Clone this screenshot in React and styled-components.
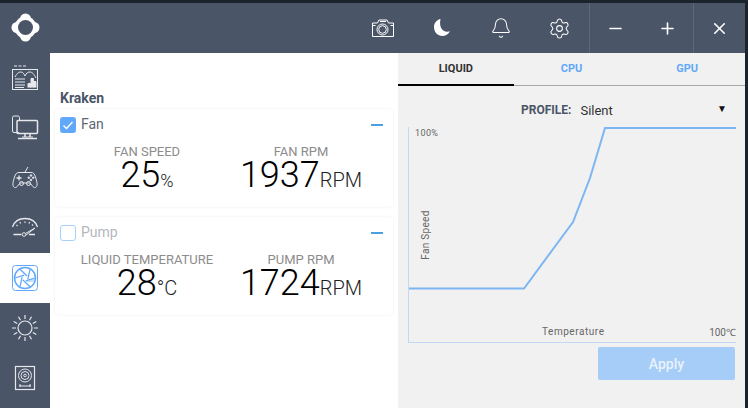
import styled, { createGlobalStyle } from "styled-components";
import { Bell, Settings, Minus, Plus, X } from "lucide-react";

const GlobalStyle = createGlobalStyle`
  html, body {
    margin: 0;
    height: 100%;
    background: #1b232d;
    font-family: Roboto, "Liberation Sans", sans-serif;
    overflow: hidden;
  }
  * {
    box-sizing: border-box;
  }
`;

const Logo = () => (
  <svg width="50" height="50" viewBox="0 0 50 50">
    <g fill="#fff">
      <circle cx="25.5" cy="24.5" r="11" />
      <circle cx="25.5" cy="16" r="5.500" />
      <circle cx="25.5" cy="33" r="5.500" />
      <circle cx="17" cy="24.5" r="5.500" />
      <circle cx="34" cy="24.5" r="5.500" />
    </g>
    <circle cx="25.5" cy="24.5" r="7.500" fill="#4a5568" />
  </svg>
);

const DashIcon = () => (
  <svg width="28" height="26" viewBox="0 0 28 26" fill="none" stroke="currentColor" strokeWidth="1">
    <path d="M3 1h3M7.500 1h3M12 1h3" />
    <rect x="1.500" y="4.500" width="25" height="20" />
    <path d="M4 12c2-4 4-5 6-5s3 2 4 4c1-3 3-4 5-4s4 2 6 6" />
    <path d="M4 14h10M4 17h10M4 20h10M4 22.500h9" />
    <path d="M17 22.500v-4h2.500v4M20 22.500v-9h2.500v9M23 22.500v-6h2v6" fill="currentColor" />
  </svg>
);

const DesktopIcon = () => (
  <svg width="28" height="26" viewBox="0 0 28 26" fill="none" stroke="currentColor" strokeWidth="1">
    <path d="M8 17.500H3a1.500 1.500 0 0 1-1.500-1.500V2.500A1.500 1.500 0 0 1 3 1h4a1.500 1.500 0 0 1 1.500 1.500V5" />
    <rect x="6" y="5.500" width="20.500" height="13" rx="1" strokeWidth="1.500" />
    <path d="M14 19v3M19 19v3M7 23.500h19" strokeWidth="1.500" />
    <path d="M11 22h11" />
  </svg>
);

const GamepadIcon = () => (
  <svg width="28" height="26" viewBox="0 0 28 26" fill="none" stroke="currentColor" strokeWidth="1">
    <path d="M14 7l3-5" />
    <path d="M8 7.500h12c2.500 0 3.500 1.500 4.500 4.500.8 2.800 2 6.500 1.500 8.500-.5 2-2.500 2.800-4 1.200l-2.500-3c-.5-.6-1-.7-2-.7h-7c-1 0-1.500.1-2 .7l-2.500 3c-1.500 1.600-3.500.8-4-1.200-.5-2 .7-5.700 1.500-8.500 1-3 2-4.500 4.500-4.500z" />
    <path d="M8 10.500v5M5.500 13h5" strokeWidth="1.300" />
    <circle cx="20" cy="10.500" r=".8" fill="currentColor" />
    <circle cx="20" cy="15" r=".8" fill="currentColor" />
    <circle cx="17.800" cy="12.700" r=".8" fill="currentColor" />
    <circle cx="22.200" cy="12.700" r=".8" fill="currentColor" />
    <circle cx="10.500" cy="18.500" r="2" />
    <circle cx="17.500" cy="18.500" r="2" />
  </svg>
);

const GaugeIcon = () => (
  <svg width="28" height="24" viewBox="0 0 28 24" fill="none" stroke="currentColor" strokeWidth="1">
    <path d="M1.500 11C3.500 5 8 2.500 14 2.500S24.500 5 26.500 11" strokeWidth="1.300" />
    <path d="M5.500 9l1 1M9 6l.5 1.500M14 5.500V7M18.500 6l-.5 1.500M22 8.500l-1 1" strokeWidth="1.200" />
    <path d="M2.500 18.500h8M18 18.500h6" strokeWidth="1.500" />
    <circle cx="13" cy="18.500" r="1.800" />
    <path d="M14.500 17.500L24 12M14.500 19.500L24 12" />
  </svg>
);

// shutter blades: each runs from the rim to the corner of the small centre hexagon
const blades = [0, 60, 120, 180, 240, 300].map((deg) => {
  const a = (deg * Math.PI) / 180;
  const b = ((deg + 75) * Math.PI) / 180;
  const x1 = 13 + 10 * Math.cos(a);
  const y1 = 13 + 10 * Math.sin(a);
  const x2 = 13 + 3 * Math.cos(b);
  const y2 = 13 + 3 * Math.sin(b);
  return `M${x1.toFixed(1)} ${y1.toFixed(1)}L${x2.toFixed(1)} ${y2.toFixed(1)}`;
});

const FanIcon = () => (
  <svg width="26" height="26" viewBox="0 0 26 26" fill="none" stroke="#62a8fa" strokeWidth="1">
    <rect x=".5" y=".5" width="25" height="25" rx="3" />
    <circle cx="13" cy="13" r="10.500" strokeWidth="1.500" />
    <path d={blades.join("")} strokeWidth="1.300" />
    <path d="M15 14h7v3h-7z" fill="#62a8fa" fillOpacity=".35" stroke="none" />
  </svg>
);

const SunIcon = () => (
  <svg width="28" height="28" viewBox="0 0 28 28" fill="none" stroke="currentColor" strokeWidth="1.200">
    <circle cx="14" cy="14" r="7" />
    <path d="M14 1v4M14 23v4M1 14h4M23 14h4M7.500 2.700l2 3.500M18.500 21.800l2 3.500M2.700 7.500l3.500 2M21.800 18.500l3.500 2M2.700 20.500l3.500-2M21.800 9.500l3.500-2M7.500 25.300l2-3.500M18.500 6.200l2-3.500" />
  </svg>
);

const DriveIcon = () => (
  <svg width="22" height="26" viewBox="0 0 22 26" fill="none" stroke="currentColor" strokeWidth="1">
    <rect x="1.500" y="1.500" width="19" height="23" strokeWidth="1.200" />
    <circle cx="11" cy="10.500" r="6.500" />
    <circle cx="11" cy="10.500" r="4" />
    <circle cx="11" cy="10.500" r="1.300" />
    <path d="M5 21h12M6 19v3M16 19v3" />
  </svg>
);

const CameraIcon = () => (
  <svg width="24" height="20" viewBox="0 0 24 20" fill="none" stroke="currentColor" strokeWidth="1">
    <path d="M1.500 5h5l1.500-3h8l1.500 3h5v13.500h-21z" />
    <path d="M9 3.500h6" />
    <circle cx="11.500" cy="11.500" r="5.500" />
    <circle cx="11.500" cy="11.500" r="3.800" />
    <path d="M1.500 7.500h3M19.500 7.500h3" />
  </svg>
);

const MoonIcon = () => (
  <svg width="20" height="20" viewBox="0 0 20 20">
    <path
      fill="#fff"
      d="M8.500 1C5 1.600 2 4.700 2 9.200 2 14.100 5.800 18 10.300 18c3.300 0 6-1.800 7.700-4.700-4 1.300-8-.6-9.300-4.300C7.800 6.300 8 3.500 8.500 1z"
    />
  </svg>
);

const CheckIcon = () => (
  <svg width="16" height="16" viewBox="0 0 16 16" fill="none" stroke="#fff" strokeWidth="1.400">
    <path d="M3.500 8.500l3 3 6-6.500" />
  </svg>
);

const sideItems = [
  { id: "dash", icon: <DashIcon /> },
  { id: "desktop", icon: <DesktopIcon /> },
  { id: "game", icon: <GamepadIcon /> },
  { id: "gauge", icon: <GaugeIcon /> },
  { id: "fan", icon: <FanIcon />, active: true },
  { id: "sun", icon: <SunIcon /> },
  { id: "drive", icon: <DriveIcon /> },
];

const cards = [
  {
    name: "Fan",
    checked: true,
    stats: [
      { label: "FAN SPEED", value: "25", unit: "%", small: true },
      { label: "FAN RPM", value: "1937", unit: "RPM" },
    ],
  },
  {
    name: "Pump",
    checked: false,
    stats: [
      { label: "LIQUID TEMPERATURE", value: "28", unit: "°C" },
      { label: "PUMP RPM", value: "1724", unit: "RPM" },
    ],
  },
];

const App = () => {
  return (
    <>
      <GlobalStyle />
      <Window>
        <Header>
          <LogoWrap>
            <Logo />
          </LogoWrap>
          <HeaderTools>
            <ToolButton><CameraIcon /></ToolButton>
            <ToolButton><MoonIcon /></ToolButton>
            <ToolButton><Bell size={22} strokeWidth={1.1} /></ToolButton>
            <ToolButton><Settings size={23} strokeWidth={1.1} /></ToolButton>
          </HeaderTools>
          <WindowGroup $width={104}>
            <WindowButton><Minus size={19} strokeWidth={2} /></WindowButton>
            <WindowButton><Plus size={19} strokeWidth={2} /></WindowButton>
          </WindowGroup>
          <WindowGroup $width={52}>
            <WindowButton><X size={19} strokeWidth={2} /></WindowButton>
          </WindowGroup>
        </Header>
        <Body>
          <Sidebar>
            {sideItems.map((item) => (
              <SideItem key={item.id} $active={item.active}>
                {item.icon}
              </SideItem>
            ))}
          </Sidebar>
          <Main>
            <Title>Kraken</Title>
            {cards.map((card) => (
              <Card key={card.name}>
                <CardHead>
                  <Check $checked={card.checked}>{card.checked && <CheckIcon />}</Check>
                  <CardName $checked={card.checked}>{card.name}</CardName>
                  <Collapse />
                </CardHead>
                <Stats>
                  {card.stats.map((stat) => (
                    <Stat key={stat.label}>
                      <StatLabel>{stat.label}</StatLabel>
                      <StatValue>
                        {stat.value}
                        <StatUnit $small={stat.small}>{stat.unit}</StatUnit>
                      </StatValue>
                    </Stat>
                  ))}
                </Stats>
              </Card>
            ))}
          </Main>
          <Panel>
            <Tabs>
              <Tab $active>LIQUID</Tab>
              <Tab>CPU</Tab>
              <Tab>GPU</Tab>
            </Tabs>
            <ProfileRow>
              <ProfileLabel>PROFILE:</ProfileLabel>
              <ProfileValue>Silent</ProfileValue>
              <ProfileArrow>▼</ProfileArrow>
            </ProfileRow>
            <Chart>
              <svg width="328" height="216" viewBox="-1 0 328 216">
                <path
                  d="M0 161.500H115L164 95l17-44 15-50H327"
                  fill="none"
                  stroke="#7db6f3"
                  strokeWidth="2"
                />
              </svg>
              <PercentLabel>100%</PercentLabel>
              <YLabel>Fan Speed</YLabel>
              <XLabel>Temperature</XLabel>
              <MaxLabel>100℃</MaxLabel>
            </Chart>
            <ApplyRow>
              <ApplyButton>Apply</ApplyButton>
            </ApplyRow>
          </Panel>
        </Body>
      </Window>
    </>
  );
};

const Window = styled.div`
  width: 745px;
  height: 405px;
  margin-top: 3px;
  display: flex;
  flex-direction: column;
  background: #4a5568;
`;

const Header = styled.div`
  height: 50px;
  flex: none;
  display: flex;
  align-items: stretch;
  color: #fff;
`;

const LogoWrap = styled.div`
  width: 50px;
  display: flex;
`;

const HeaderTools = styled.div`
  margin-left: auto;
  display: flex;
`;

const ToolButton = styled.div`
  width: 59px;
  display: flex;
  align-items: center;
  justify-content: center;
`;

const WindowGroup = styled.div`
  width: ${(p) => p.$width}px;
  display: flex;
  border-left: 1px solid #5e6879;
`;

const WindowButton = styled.div`
  flex: 1;
  display: flex;
  align-items: center;
  justify-content: center;
`;

const Body = styled.div`
  flex: 1;
  min-height: 0;
  display: flex;
`;

const Sidebar = styled.div`
  width: 50px;
  flex: none;
  display: flex;
  flex-direction: column;
  color: #e6e8ec;
`;

const SideItem = styled.div`
  height: 50px;
  flex: none;
  display: flex;
  align-items: center;
  justify-content: center;
  background: ${(p) => (p.$active ? "#fff" : "transparent")};
`;

const Main = styled.div`
  width: 348px;
  flex: none;
  background: #fff;
  padding: 37px 5px 0;
`;

const Title = styled.div`
  height: 19px;
  padding-left: 5px;
  font-size: 14px;
  font-weight: 700;
  line-height: 16px;
  color: #4a5568;
`;

const Card = styled.div`
  height: 98px;
  margin-bottom: 10px;
  padding: 0 10px 0 5px;
  border-radius: 5px;
  background: #fff;
  box-shadow: 0 0 3px rgba(0, 0, 0, 0.07);
`;

const CardHead = styled.div`
  height: 31px;
  display: flex;
  align-items: center;
  gap: 5px;
`;

const Check = styled.div`
  width: 16px;
  height: 16px;
  border-radius: 3px;
  background: ${(p) => (p.$checked ? "#62a8fa" : "#fff")};
  border: ${(p) => (p.$checked ? "none" : "1px solid #a9cffb")};
`;

const CardName = styled.span`
  padding-bottom: 2px;
  font-size: 14px;
  color: ${(p) => (p.$checked ? "#5f6671" : "#b4b7bc")};
`;

const Collapse = styled.div`
  width: 12px;
  height: 2px;
  margin-left: auto;
  background: #4a9fe0;
`;

const Stats = styled.div`
  display: grid;
  grid-template-columns: 154px 154px;
  margin: 5px 0 0 10px;
`;

const Stat = styled.div`
  display: flex;
  flex-direction: column;
  align-items: center;
`;

const StatLabel = styled.div`
  font-size: 13px;
  line-height: 14px;
  color: #8c8c8c;
  white-space: nowrap;
`;

const StatValue = styled.div`
  font-size: 36px;
  font-weight: 350;
  line-height: 32px;
  color: #000;
  white-space: nowrap;
`;

const StatUnit = styled.span`
  font-size: ${(p) => (p.$small ? "18px" : "20px")};
  font-weight: 350;
  color: #222;
`;

const Panel = styled.div`
  flex: 1;
  min-width: 0;
  display: flex;
  flex-direction: column;
  background: #f1f1f1;
`;

const Tabs = styled.div`
  height: 33px;
  flex: none;
  display: grid;
  grid-template-columns: repeat(3, 1fr);
  border-bottom: 1px solid #a8a8ac;
`;

const Tab = styled.div`
  height: 33px;
  display: flex;
  align-items: center;
  justify-content: center;
  font-size: 11px;
  font-weight: 700;
  color: ${(p) => (p.$active ? "#333" : "#62a8fa")};
  border-bottom: 2px solid ${(p) => (p.$active ? "#000" : "transparent")};
`;

const ProfileRow = styled.div`
  height: 41px;
  flex: none;
  display: flex;
  align-items: center;
  padding: 7px 18px 0 123px;
`;

const ProfileLabel = styled.span`
  font-size: 12px;
  font-weight: 700;
  color: #4a5568;
  margin-right: 9px;
`;

const ProfileValue = styled.span`
  font-size: 13px;
  color: #333;
`;

const ProfileArrow = styled.span`
  margin-left: auto;
  font-size: 10px;
  color: #111;
  position: relative;
  top: -2px;
`;

const Chart = styled.div`
  position: relative;
  width: 328px;
  height: 216px;
  flex: none;
  margin-left: 10px;
  border-left: 1px solid #c3d8f3;
  border-bottom: 1px solid #c3d8f3;
  svg {
    display: block;
    position: absolute;
    left: -1px;
    top: 0;
  }
`;

const ChartText = styled.span`
  position: absolute;
  font-size: 10px;
  line-height: 12px;
  color: #666;
  white-space: nowrap;
`;

const PercentLabel = styled(ChartText)`
  left: 6px;
  top: 0;
  font-size: 9px;
  letter-spacing: 0.4px;
`;

const YLabel = styled(ChartText)`
  left: -8px;
  top: 102px;
  letter-spacing: 0.3px;
  transform: rotate(-90deg);
`;

const XLabel = styled(ChartText)`
  left: 133px;
  top: 199px;
  letter-spacing: 0.55px;
`;

const MaxLabel = styled(ChartText)`
  right: 0;
  top: 200px;
`;

const ApplyRow = styled.div`
  display: flex;
  justify-content: flex-end;
  padding: 4px 10px 0 0;
`;

const ApplyButton = styled.div`
  width: 137px;
  height: 33px;
  display: flex;
  align-items: center;
  justify-content: center;
  border-radius: 2px;
  background: #a6cdf7;
  color: #e9f2fc;
  font-size: 14px;
  font-weight: 500;
`;

export default App;
